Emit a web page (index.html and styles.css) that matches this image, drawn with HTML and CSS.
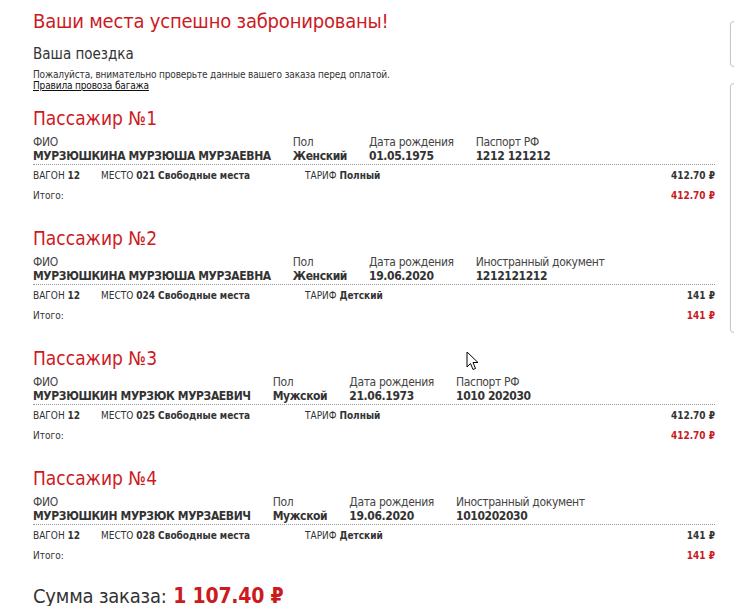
FILE: index.html
```html
<!DOCTYPE html>
<html lang="ru">
<head>
<meta charset="utf-8">
<title>Ваши места успешно забронированы!</title>
<link rel="stylesheet" href="styles.css">
</head>
<body>
<div class="page">
  <main class="main">
    <h1 class="title">Ваши места успешно забронированы!</h1>
    <h3 class="subtitle">Ваша поездка</h3>
    <p class="note">Пожалуйста, внимательно проверьте данные вашего заказа перед оплатой.<br><a class="link" href="#">Правила провоза багажа</a></p>

    <div class="pax-list">
      <section class="pax">
        <h2 class="pax-title">Пассажир №1</h2>
        <div class="pax-info">
          <div class="field"><div class="label">ФИО</div><div class="value">МУРЗЮШКИНА МУРЗЮША МУРЗАЕВНА</div></div>
          <div class="field"><div class="label">Пол</div><div class="value">Женский</div></div>
          <div class="field"><div class="label">Дата рождения</div><div class="value">01.05.1975</div></div>
          <div class="field"><div class="label">Паспорт РФ</div><div class="value">1212 121212</div></div>
        </div>
        <div class="ticket-row">
          <span>ВАГОН <b>12</b></span>
          <span>МЕСТО <b>021 Свободные места</b></span>
          <span>ТАРИФ <b>Полный</b></span>
          <b class="price">412.70 ₽</b>
        </div>
        <div class="total-row"><span>Итого:</span><b class="price red">412.70 ₽</b></div>
      </section>

      <section class="pax">
        <h2 class="pax-title">Пассажир №2</h2>
        <div class="pax-info">
          <div class="field"><div class="label">ФИО</div><div class="value">МУРЗЮШКИНА МУРЗЮША МУРЗАЕВНА</div></div>
          <div class="field"><div class="label">Пол</div><div class="value">Женский</div></div>
          <div class="field"><div class="label">Дата рождения</div><div class="value">19.06.2020</div></div>
          <div class="field"><div class="label">Иностранный документ</div><div class="value">1212121212</div></div>
        </div>
        <div class="ticket-row">
          <span>ВАГОН <b>12</b></span>
          <span>МЕСТО <b>024 Свободные места</b></span>
          <span>ТАРИФ <b>Детский</b></span>
          <b class="price">141 ₽</b>
        </div>
        <div class="total-row"><span>Итого:</span><b class="price red">141 ₽</b></div>
      </section>

      <section class="pax">
        <h2 class="pax-title">Пассажир №3</h2>
        <div class="pax-info">
          <div class="field"><div class="label">ФИО</div><div class="value">МУРЗЮШКИН МУРЗЮК МУРЗАЕВИЧ</div></div>
          <div class="field"><div class="label">Пол</div><div class="value">Мужской</div></div>
          <div class="field"><div class="label">Дата рождения</div><div class="value">21.06.1973</div></div>
          <div class="field"><div class="label">Паспорт РФ</div><div class="value">1010 202030</div></div>
        </div>
        <div class="ticket-row">
          <span>ВАГОН <b>12</b></span>
          <span>МЕСТО <b>025 Свободные места</b></span>
          <span>ТАРИФ <b>Полный</b></span>
          <b class="price">412.70 ₽</b>
        </div>
        <div class="total-row"><span>Итого:</span><b class="price red">412.70 ₽</b></div>
      </section>

      <section class="pax">
        <h2 class="pax-title">Пассажир №4</h2>
        <div class="pax-info">
          <div class="field"><div class="label">ФИО</div><div class="value">МУРЗЮШКИН МУРЗЮК МУРЗАЕВИЧ</div></div>
          <div class="field"><div class="label">Пол</div><div class="value">Мужской</div></div>
          <div class="field"><div class="label">Дата рождения</div><div class="value">19.06.2020</div></div>
          <div class="field"><div class="label">Иностранный документ</div><div class="value">1010202030</div></div>
        </div>
        <div class="ticket-row">
          <span>ВАГОН <b>12</b></span>
          <span>МЕСТО <b>028 Свободные места</b></span>
          <span>ТАРИФ <b>Детский</b></span>
          <b class="price">141 ₽</b>
        </div>
        <div class="total-row"><span>Итого:</span><b class="price red">141 ₽</b></div>
      </section>
    </div>

    <div class="sum">Сумма заказа: <b class="sum-value">1 107.40 ₽</b></div>
  </main>

  <aside class="side">
    <div class="side-box side-box-small"></div>
    <div class="side-box side-box-large"></div>
  </aside>
</div>

<svg class="cursor" width="14" height="20" viewBox="0 0 14 20" aria-hidden="true">
  <path d="M1 1 L1 16 L4.5 12.5 L7 18.5 L9.5 17.5 L7 11.5 L12 11.5 Z" fill="#fff" stroke="#000" stroke-width="1" stroke-linejoin="miter"/>
</svg>
</body>
</html>
```

FILE: styles.css
```css
html, body {
  margin: 0;
  padding: 0;
  background: #fff;
}

body {
  font-family: "DejaVu Sans Condensed", "DejaVu Sans", sans-serif;
  font-stretch: condensed;
  color: #333;
  overflow: hidden;
  position: relative;
  width: 734px;
  height: 606px;
}

.page {
  display: flex;
  gap: 15px;
  padding: 9px 0 0 33px;
}

.main {
  width: 682px;
  flex: none;
}

.title {
  margin: 0;
  font-size: 20px;
  line-height: 24px;
  font-weight: normal;
  letter-spacing: -0.2px;
  color: #cc1b1f;
}

.subtitle {
  margin: 12px 0 0;
  font-size: 15px;
  line-height: 18px;
  font-weight: normal;
  color: #333;
}

.note {
  margin: 6px 0 0;
  font-size: 10px;
  line-height: 11px;
  letter-spacing: -0.15px;
  color: #333;
}

.link {
  color: #111;
  text-decoration: underline;
}

.pax-list {
  margin-top: 16px;
  display: flex;
  flex-direction: column;
  gap: 25px;
}

.pax-title {
  margin: 0;
  font-size: 19px;
  line-height: 22px;
  font-weight: normal;
  color: #cc1b1f;
}

.pax-info {
  display: flex;
  gap: 22px;
  margin-top: 6px;
  padding-bottom: 1px;
  border-bottom: 1px dotted #999;
}

.label {
  font-size: 12px;
  line-height: 14px;
  letter-spacing: -0.35px;
  color: #444;
}

.value {
  font-size: 12px;
  line-height: 14px;
  font-weight: bold;
  letter-spacing: -0.38px;
  color: #333;
}

.ticket-row {
  display: grid;
  grid-template-columns: 68px 204px 1fr auto;
  margin-top: 5px;
  font-size: 10px;
  line-height: 12px;
  color: #333;
}

.total-row {
  display: flex;
  justify-content: space-between;
  margin-top: 8px;
  font-size: 10px;
  line-height: 12px;
  color: #333;
}

.price {
  font-weight: bold;
  color: #333;
}

.price.red {
  color: #cc1b1f;
}

.sum {
  margin-top: 22px;
  font-size: 20px;
  line-height: 24px;
  letter-spacing: -0.2px;
  color: #333;
}

.sum-value {
  color: #cc1b1f;
  margin-left: 1px;
  font-size: 21px;
}

.side {
  flex: none;
  width: 260px;
  display: flex;
  flex-direction: column;
  gap: 16px;
  padding-top: 12px;
}

.side-box {
  border: 1px solid #c8c8c8;
  border-radius: 4px;
  box-shadow: 0 0 2px rgba(0, 0, 0, 0.08);
  background: #fff;
}

.side-box-small {
  height: 44px;
}

.side-box-large {
  height: 248px;
}

.cursor {
  position: absolute;
  left: 466px;
  top: 351px;
}
```
